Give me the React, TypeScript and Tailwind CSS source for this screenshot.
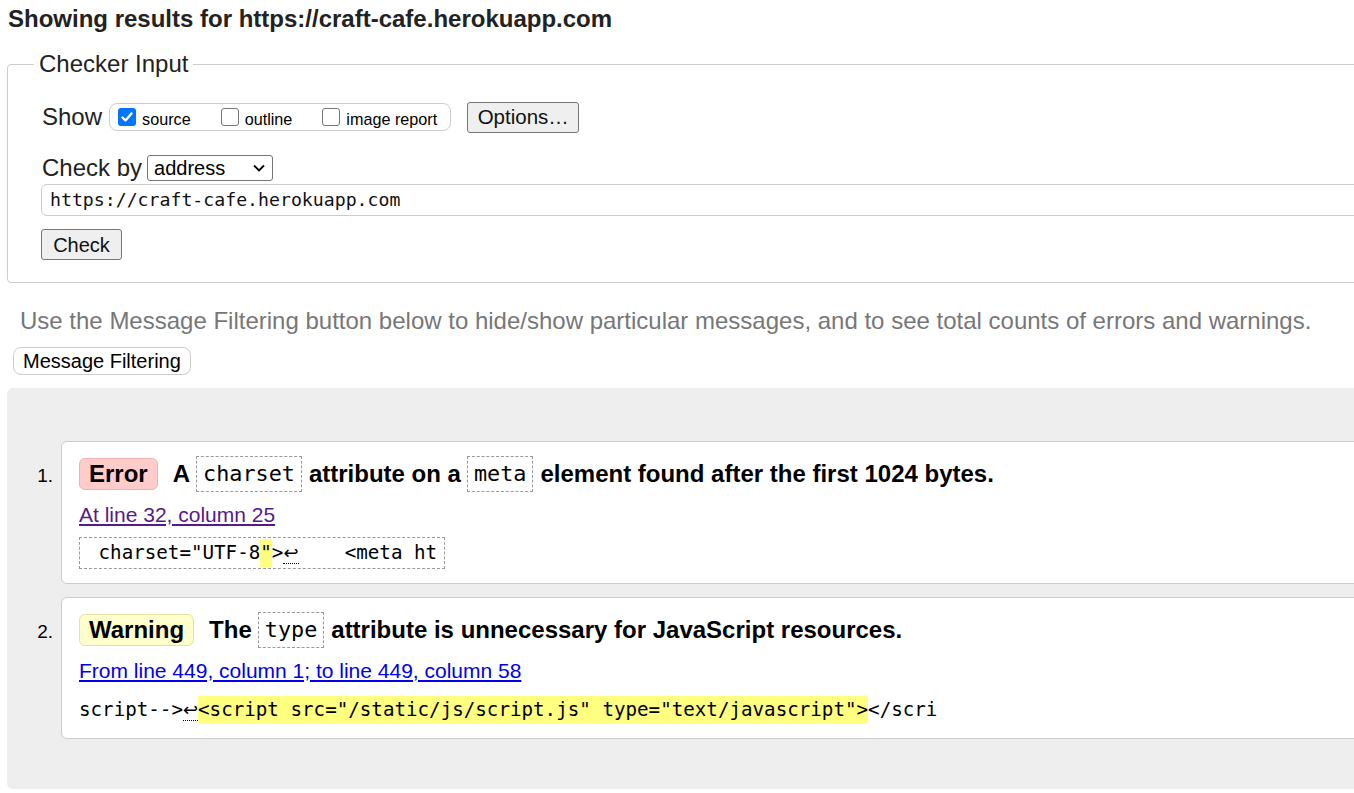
import React from "react";

const mono = "font-['DejaVu_Sans_Mono','Liberation_Mono',monospace]";

function Box({ checked, label }: { checked?: boolean; label: string }) {
  return (
    <span className="flex items-center">
      {checked ? (
        <span className="w-[18px] h-[18px] rounded-[3px] bg-[#0075ff] flex items-center justify-center">
          <svg width="14" height="14" viewBox="0 0 14 14">
            <path d="M2.5 7.5 L5.5 10.5 L11.5 3.5" stroke="white" strokeWidth="2.4" fill="none" strokeLinecap="round" strokeLinejoin="round" />
          </svg>
        </span>
      ) : (
        <span className="w-[18px] h-[18px] rounded-[3px] border-[1.5px] border-[#767676] bg-white" />
      )}
      <span className="ml-[6px] text-[16.2px] leading-[18px] mt-[3px]">{label}</span>
    </span>
  );
}

function Code({ children }: { children: React.ReactNode }) {
  return (
    <span className={`${mono} font-normal text-[21.8px] border border-dashed border-[#999] px-[6px] py-[2px] inline-block leading-[30px] ml-[6px] mr-[7px]`}>
      {children}
    </span>
  );
}

function Ret() {
  return (
    <span className="font-['DejaVu_Sans',sans-serif] border-b border-dotted border-[#000] text-[18px] leading-[20px] inline-block">
      ↩
    </span>
  );
}

export default function App() {
  return (
    <div className="w-[1354px] h-[793px] overflow-hidden bg-white text-black font-['Liberation_Sans',Arial,sans-serif]">
      <div className="w-[1420px] pl-[7px]">
        <h2 className="text-[24px] leading-[28px] font-bold pt-[5px] pl-[1px] text-[#222]">
          Showing results for https://craft-cafe.herokuapp.com
        </h2>

        <fieldset className="mt-[17px] border border-[#ccc] rounded-[4px] pl-[26px] pb-[22px] pt-0 m-0">
          <legend className="px-[5px] text-[24px] leading-[28px] text-[#222]">Checker Input</legend>
          <div className="pl-[8px]">
            <div className="flex items-center mt-[23px] h-[32px]">
              <span className="text-[24px] leading-[28px] text-[#222]">Show</span>
              <div className="ml-[7px] flex items-center border border-[#ccc] rounded-[8px] h-[28px] pl-[8px] pr-[13px] gap-[30px]">
                <Box checked label="source" />
                <Box label="outline" />
                <Box label="image report" />
              </div>
              <button className="ml-[16px] h-[31px] w-[112px] bg-[#efefef] border border-[#767676] rounded-[3px] text-[20.5px] leading-[24px] text-[#111]">
                Options…
              </button>
            </div>
            <div className="flex items-center mt-[22px] h-[26px]">
              <span className="text-[24px] leading-[28px] text-[#222]">Check by</span>
              <span className="ml-[5px] w-[126px] h-[26px] border border-[#767676] rounded-[3px] flex items-center justify-between pl-[6px] pr-[6px] text-[20px]">
                <span>address</span>
                <svg width="14" height="10" viewBox="0 0 14 10">
                  <path d="M2 2.5 L7 7.5 L12 2.5" stroke="black" strokeWidth="1.8" fill="none" />
                </svg>
              </span>
            </div>
            <div className={`mt-[3px] -ml-[1px] h-[32px] border border-[#ccc] rounded-[6px] flex items-center pl-[8px] ${mono} text-[18.2px] text-[#111]`}>
              https://craft-cafe.herokuapp.com
            </div>
            <button className="mt-[13px] -ml-[1px] w-[81px] h-[31px] bg-[#efefef] border border-[#767676] rounded-[3px] text-[20px] leading-[24px] text-[#111]">
              Check
            </button>
          </div>
        </fieldset>

        <p className="mt-[24px] pl-[13px] text-[24px] leading-[28px] text-[#777]">
          Use the Message Filtering button below to hide/show particular messages, and to see total counts of errors and warnings.
        </p>
        <button className="mt-[12px] ml-[6px] h-[28px] px-[9px] bg-white border border-[#ccc] rounded-[8px] text-[20px] leading-[22px] text-black">
          Message Filtering
        </button>

        <div className="mt-[13px] bg-[#eee] rounded-[6px] pt-[53px] pb-[50px] flex flex-col gap-[13px]">
          <div className="flex">
            <div className="w-[54px] pr-[8px] text-right text-[19px] pt-[21px]">1.</div>
            <div className="flex-1 bg-white border border-[#ccc] rounded-[6px] pl-[17px] pt-[14px] pb-[14px]">
              <div className="flex items-center text-[24px] font-bold">
                <span className="h-[32px] px-[9px] bg-[#fcc] border border-[#f0b0b0] rounded-[6px] flex items-center">Error</span>
                <span className="ml-[15px]">A</span>
                <Code>charset</Code>
                <span>attribute on a</span>
                <Code>meta</Code>
                <span>element found after the first 1024 bytes.</span>
              </div>
              <div className="mt-[11px] text-[21px] leading-[24px]">
                <a className="text-[#551a8b] underline">At line 32, column 25</a>
              </div>
              <div className={`mt-[10px] inline-block border border-dashed border-[#999] px-[7px] ${mono} text-[19.2px] leading-[30px] whitespace-pre`}>
                {" charset=\"UTF-8"}
                <span className="bg-[#ffff80] inline-block leading-[28px]">"</span>
                {">"}
                <Ret />
                {"    <meta ht"}
              </div>
            </div>
          </div>

          <div className="flex">
            <div className="w-[54px] pr-[8px] text-right text-[19px] pt-[21px]">2.</div>
            <div className="flex-1 bg-white border border-[#ccc] rounded-[6px] pl-[17px] pt-[14px] pb-[14px]">
              <div className="flex items-center text-[24px] font-bold">
                <span className="h-[32px] px-[9px] bg-[#ffc] border border-[#e8e0a0] rounded-[6px] flex items-center">Warning</span>
                <span className="ml-[15px]">The</span>
                <Code>type</Code>
                <span>attribute is unnecessary for JavaScript resources.</span>
              </div>
              <div className="mt-[11px] text-[21px] leading-[24px]">
                <a className="text-[#0000ee] underline">From line 449, column 1; to line 449, column 58</a>
              </div>
              <div className={`mt-[13px] ${mono} text-[19.2px] leading-[28px] whitespace-pre`}>
                {"script-->"}
                <Ret />
                <span className="bg-[#ffff80] inline-block leading-[28px]">{"<script src=\"/static/js/script.js\" type=\"text/javascript\">"}</span>
                {"</scri"}
              </div>
            </div>
          </div>
        </div>
      </div>
    </div>
  );
}
